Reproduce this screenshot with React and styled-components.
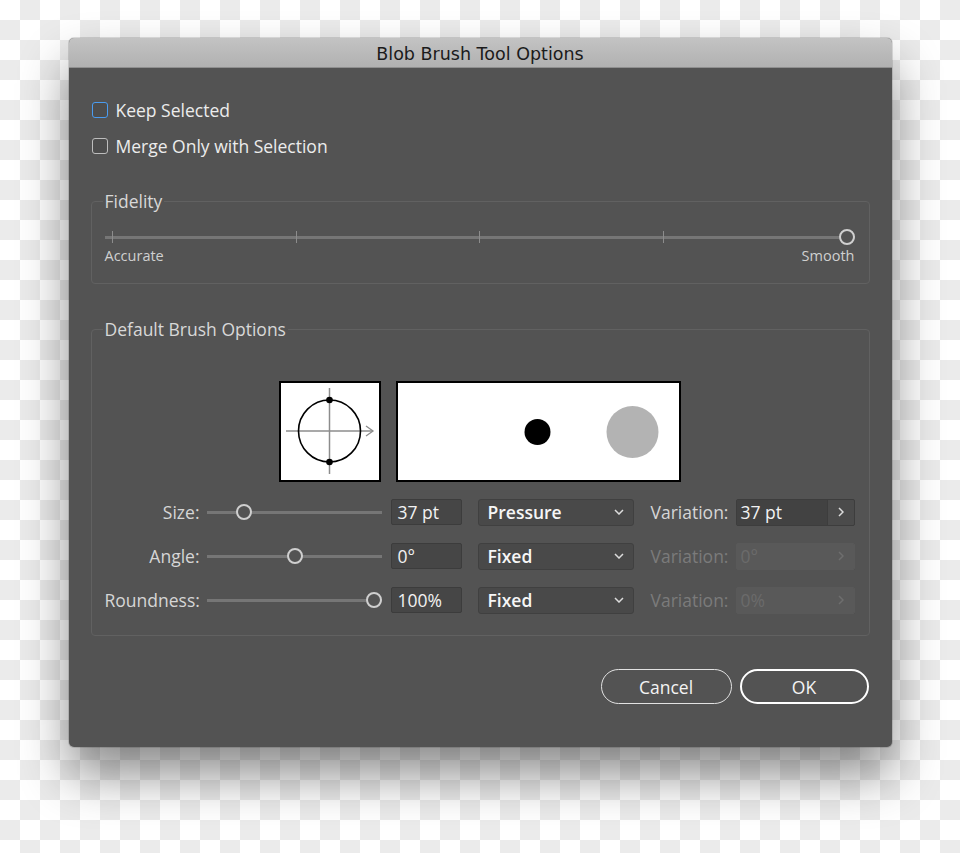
import React from "react";
import styled, { createGlobalStyle } from "styled-components";

const GlobalStyle = createGlobalStyle`
  html, body {
    margin: 0;
    padding: 0;
  }
  body {
    height: 853px;
    overflow: hidden;
    background-color: #fff;
    background-image: conic-gradient(#ebebeb 25%, #fff 0 50%, #ebebeb 0 75%, #fff 0);
    background-size: 40px 40px;
    font-family: "Open Sans", Lato, sans-serif;
  }
`;

const Page = styled.div`
  padding-top: 38px;
`;

const Dialog = styled.div`
  width: 823px;
  height: 709px;
  margin: 0 auto;
  box-sizing: border-box;
  background: #535353;
  border-radius: 5px;
  overflow: hidden;
  box-shadow: 0 0 0 1px rgba(0, 0, 0, 0.12), 0 28px 50px rgba(0, 0, 0, 0.45);
  display: flex;
  flex-direction: column;
`;

const TitleBar = styled.div`
  height: 30px;
  box-sizing: border-box;
  padding-top: 2px;
  flex-shrink: 0;
  background: linear-gradient(#c3c3c3, #b1b1b1);
  border-bottom: 1px solid #8f8f8f;
  display: flex;
  align-items: center;
  justify-content: center;
  font-family: "DejaVu Sans", "Liberation Sans", sans-serif;
  font-size: 17.5px;
  color: #1b1b1b;
`;

const Body = styled.div`
  padding: 30px 22px 43px;
  display: flex;
  flex-direction: column;
`;

const CheckRow = styled.label`
  display: flex;
  align-items: center;
  gap: 8px;
  height: 24px;
  margin-left: 1px;
  margin-top: ${(p) => (p.$first ? 0 : 12)}px;
  font-size: 17.5px;
  color: #ececec;
`;

const Box = styled.span`
  width: 16px;
  height: 16px;
  box-sizing: border-box;
  border-radius: 3px;
  border: 1.5px solid ${(p) => (p.$focus ? "#4a9cf0" : "#bdbdbd")};
  background: #4d4d4d;
`;

const Group = styled.fieldset`
  margin: ${(p) => p.$top}px 0 0;
  padding: 0 14px ${(p) => p.$bottom}px 13px;
  border: 1px solid #616161;
  border-radius: 4px;
  min-width: 0;
`;

const Legend = styled.legend`
  padding: 0 2px;
  margin-left: -2px;
  font-size: 17.5px;
  line-height: 20px;
  color: #d8d8d8;
`;

const Slider = styled.div`
  position: relative;
  height: 16px;
  width: ${(p) => (p.$width ? `${p.$width}px` : "auto")};
  margin-top: ${(p) => p.$top || 0}px;
  margin-left: ${(p) => p.$left || 0}px;
  flex-shrink: 0;
  &::before {
    content: "";
    position: absolute;
    left: 0;
    right: 0;
    top: 6.5px;
    height: 3px;
    background: #767676;
  }
`;

const Tick = styled.span`
  position: absolute;
  top: 2px;
  width: 1px;
  height: 12px;
  margin-left: -0.5px;
  background: #8c8c8c;
`;

const Knob = styled.span`
  position: absolute;
  top: 0;
  width: 16px;
  height: 16px;
  margin-left: -8px;
  box-sizing: border-box;
  border-radius: 50%;
  border: 2.5px solid #cfcfcf;
  background: #535353;
`;

const ScaleLabels = styled.div`
  display: flex;
  justify-content: space-between;
  margin-top: 3px;
  font-size: 14.5px;
  line-height: 16px;
  color: #d0d0d0;
`;

const PreviewRow = styled.div`
  display: flex;
  justify-content: center;
  gap: 15px;
  margin-top: 42px;
`;

const Preview = styled.div`
  width: ${(p) => p.$w}px;
  height: 101px;
  box-sizing: border-box;
  border: 2px solid #000;
  background: #fff;
  svg {
    display: block;
  }
`;

const ParamRow = styled.div`
  display: flex;
  align-items: center;
  height: 28px;
  margin-top: 16px;
`;

const ParamLabel = styled.span`
  width: 95px;
  text-align: right;
  font-size: 17.5px;
  color: #d6d6d6;
  white-space: nowrap;
`;

const ValueField = styled.div`
  width: 71px;
  height: 26px;
  margin-left: 9px;
  box-sizing: border-box;
  padding-left: 6px;
  background: #464646;
  border: 1px solid #3c3c3c;
  border-radius: 2px;
  font-size: 17.5px;
  line-height: 24px;
  color: #f2f2f2;
`;

const Select = styled.div`
  width: 156px;
  height: 27px;
  margin-left: 16px;
  box-sizing: border-box;
  padding: 0 9px 0 9px;
  display: flex;
  align-items: center;
  justify-content: space-between;
  background: #494949;
  border: 1px solid #404040;
  border-radius: 3px;
  font-size: 17.5px;
  font-weight: 600;
  color: #f6f6f6;
`;

const VarLabel = styled.span`
  margin-left: 17px;
  font-size: 17.5px;
  color: ${(p) => (p.$disabled ? "#7b7b7b" : "#d6d6d6")};
`;

const VarField = styled.div`
  width: 119px;
  height: 27px;
  margin-left: auto;
  box-sizing: border-box;
  display: flex;
  border-radius: 2px;
  overflow: hidden;
  background: ${(p) => (p.$disabled ? "#595959" : "#4b4b4b")};
  border: 1px solid ${(p) => (p.$disabled ? "#595959" : "#3d3d3d")};
`;

const VarValue = styled.div`
  flex: 1;
  padding-left: 4px;
  font-size: 17.5px;
  line-height: 25px;
  color: ${(p) => (p.$disabled ? "#6b6b6b" : "#f2f2f2")};
  background: ${(p) => (p.$disabled ? "transparent" : "#424242")};
`;

const VarButton = styled.div`
  width: 26px;
  display: flex;
  align-items: center;
  justify-content: center;
  border-left: 1px solid ${(p) => (p.$disabled ? "transparent" : "#3d3d3d")};
`;

const Buttons = styled.div`
  display: flex;
  justify-content: flex-end;
  gap: 8px;
  margin-top: 33px;
  margin-right: 1px;
`;

const PillButton = styled.button`
  width: ${(p) => p.$w}px;
  height: 35px;
  box-sizing: border-box;
  border-radius: 18px;
  border: ${(p) => (p.$primary ? "2.5px solid #ffffff" : "1.5px solid #e2e2e2")};
  background: transparent;
  color: #f4f4f4;
  font-family: "Open Sans", Lato, sans-serif;
  font-size: 17.5px;
  padding: 0;
`;

const pos = (p) => `calc(8px + (100% - 16px) * ${p})`;

const ChevronDown = () => (
  <svg width="10" height="6" viewBox="0 0 10 6">
    <path d="M1 1l4 4 4-4" fill="none" stroke="#dcdcdc" strokeWidth="1.5" />
  </svg>
);

const ChevronRight = ({ color }) => (
  <svg width="6" height="10" viewBox="0 0 6 10">
    <path d="M1 1l4 4-4 4" fill="none" stroke={color} strokeWidth="1.5" />
  </svg>
);

const params = [
  { label: "Size:", value: "37 pt", knob: 0.186, mode: "Pressure", variation: "37 pt", disabled: false },
  { label: "Angle:", value: "0°", knob: 0.505, mode: "Fixed", variation: "0°", disabled: true },
  { label: "Roundness:", value: "100%", knob: 1, mode: "Fixed", variation: "0%", disabled: true },
];

export default function App() {
  return (
    <Page>
      <GlobalStyle />
      <Dialog>
        <TitleBar>Blob Brush Tool Options</TitleBar>
        <Body>
          <CheckRow $first>
            <Box $focus />
            Keep Selected
          </CheckRow>
          <CheckRow>
            <Box />
            Merge Only with Selection
          </CheckRow>

          <Group $top={33} $bottom={19}>
            <Legend>Fidelity</Legend>
            <Slider $top={18}>
              {[0, 0.25, 0.5, 0.75].map((t) => (
                <Tick key={t} style={{ left: pos(t) }} />
              ))}
              <Knob style={{ left: pos(1) }} />
            </Slider>
            <ScaleLabels>
              <span>Accurate</span>
              <span>Smooth</span>
            </ScaleLabels>
          </Group>

          <Group $top={35} $bottom={21}>
            <Legend>Default Brush Options</Legend>
            <PreviewRow>
              <Preview $w={102}>
                <svg width="98" height="97" viewBox="2 2 98 97">
                  <line x1="50.5" y1="7" x2="50.5" y2="93" stroke="#8c8c8c" strokeWidth="1.5" />
                  <line x1="7" y1="50" x2="94" y2="50" stroke="#8c8c8c" strokeWidth="1.5" />
                  <path d="M87 45l7 5-7 5" fill="none" stroke="#8c8c8c" strokeWidth="1.3" />
                  <circle cx="50.5" cy="50" r="31" fill="none" stroke="#000" strokeWidth="1.6" />
                  <circle cx="50.5" cy="19" r="3.3" fill="#000" />
                  <circle cx="50.5" cy="81" r="3.3" fill="#000" />
                </svg>
              </Preview>
              <Preview $w={285}>
                <svg width="281" height="97" viewBox="2 2 281 97">
                  <circle cx="141.5" cy="51" r="13" fill="#000" />
                  <circle cx="236.5" cy="51" r="26" fill="#b3b3b3" />
                </svg>
              </Preview>
            </PreviewRow>

            {params.map((p) => (
              <ParamRow key={p.label}>
                <ParamLabel>{p.label}</ParamLabel>
                <Slider $width={175} $left={7}>
                  <Knob style={{ left: pos(p.knob) }} />
                </Slider>
                <ValueField>{p.value}</ValueField>
                <Select>
                  <span>{p.mode}</span>
                  <ChevronDown />
                </Select>
                <VarLabel $disabled={p.disabled}>Variation:</VarLabel>
                <VarField $disabled={p.disabled}>
                  <VarValue $disabled={p.disabled}>{p.variation}</VarValue>
                  <VarButton $disabled={p.disabled}>
                    <ChevronRight color={p.disabled ? "#6e6e6e" : "#dcdcdc"} />
                  </VarButton>
                </VarField>
              </ParamRow>
            ))}
          </Group>

          <Buttons>
            <PillButton $w={131}>Cancel</PillButton>
            <PillButton $w={129} $primary>
              OK
            </PillButton>
          </Buttons>
        </Body>
      </Dialog>
    </Page>
  );
}
